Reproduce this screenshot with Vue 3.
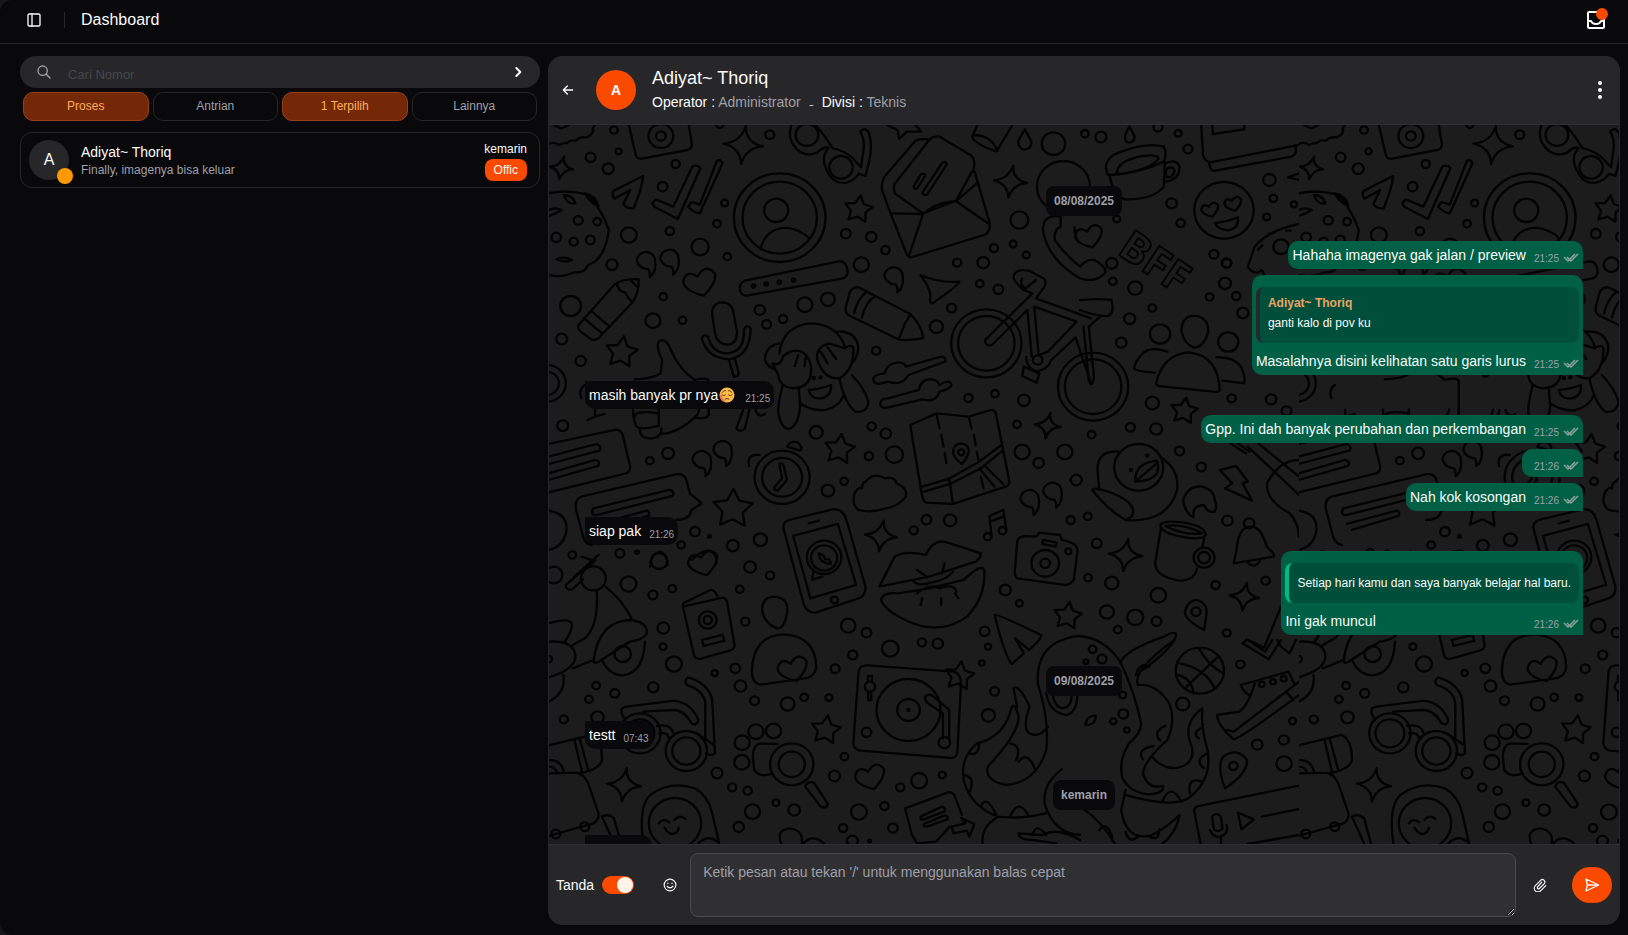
<script setup>
import { ref } from 'vue'

const tabs = [
  { label: 'Proses', active: true },
  { label: 'Antrian', active: false },
  { label: '1 Terpilih', active: true },
  { label: 'Lainnya', active: false },
]

const items = [
  { type: 'date', text: '08/08/2025' },
  { type: 'out', text: 'Hahaha imagenya gak jalan / preview', time: '21:25' },
  {
    type: 'out',
    text: 'Masalahnya disini kelihatan satu garis lurus',
    time: '21:25',
    quote: { name: 'Adiyat~ Thoriq', text: 'ganti kalo di pov ku' },
  },
  { type: 'in', text: 'masih banyak pr nya', emoji: true, time: '21:25' },
  { type: 'out', text: 'Gpp. Ini dah banyak perubahan dan perkembangan', time: '21:25' },
  { type: 'out', text: '', time: '21:26' },
  { type: 'out', text: 'Nah kok kosongan', time: '21:26' },
  { type: 'in', text: 'siap pak', time: '21:26' },
  {
    type: 'out',
    text: 'Ini gak muncul',
    time: '21:26',
    quote: { own: true, text: 'Setiap hari kamu dan saya banyak belajar hal baru.' },
  },
  { type: 'date', text: '09/08/2025' },
  { type: 'in', text: 'testt', time: '07:43' },
  { type: 'date', text: 'kemarin' },
  { type: 'in', text: '', time: '' },
]

const draft = ref('')
const search = ref('')
const signed = ref(true)

// Shape helpers for the doodle wallpaper
const star = (x, y, s, a = 8) => {
  let d = ''
  for (let i = 0; i < 10; i++) {
    const r = i % 2 ? s * 0.52 : s
    const t = ((i * 36 - 90 + a) * Math.PI) / 180
    d += `${i ? 'L' : 'M'}${Math.round(x + r * Math.cos(t))} ${Math.round(y + r * Math.sin(t))}`
  }
  return d + 'Z'
}
const sparkle = (x, y, s) => {
  const k = Math.round(s / 7)
  return `M${x + 8} ${y - s}Q${x + k - 2} ${y - k} ${x + s} ${y + 4}Q${x + k} ${y + k} ${x - 6} ${y + s}Q${x - k} ${y + k} ${x - s} ${y - 4}Q${x - k} ${y - k} ${x + 8} ${y - s}Z`
}
const heart = (x, y, s) =>
  `M${x + s * 0.3} ${y + s * 0.85}Q${x - s} ${y + s * 0.5} ${x - s} ${y - s * 0.1}Q${x - s * 0.8} ${y - s * 0.9} ${x - s * 0.1} ${y - s * 0.4}Q${x + s * 0.4} ${y - s * 1.3} ${x + s} ${y - s * 0.6}Q${x + s * 1.1} ${y} ${x + s * 0.3} ${y + s * 0.85}Z`
const comma = (x, y) => `M${x - 27} ${y}a27 27 0 0 1 52-9q8 42-14 58q1-14-4-23q-28-2-34-26z`

const doodles = [
  {
    at: 'translate(-9 -85) scale(.3444 .3333)',
    dots: [[215,270,11],[228,334,9],[147,352,14],[198,386,16],[394,372,12],[356,440,14],[667,284,13],[536,489,10],[514,551,11],[377,573,12],[258,585,23],[465,621,25],[544,650,11],[888,581,14],[962,591,15],[1003,630,12],[1318,624,12],[1374,612,10],[1412,645,10],[1392,540,26],[351,288,36],[351,288,14],[775,285,33],[874,382,34],[696,533,133],[696,533,108],[686,511,35],[111,541,13],[166,545,11],[47,592,14],[98,605,12],[146,600,13],[1491,311,34],[1520,440,77],[522,254,10]],
    paths: [
      'M258 255L278 345Q282 358 296 356L428 330Q442 326 441 312L432 255',
      'M25 312q20-8 30 3q15-8 22-5q10-12 28-8q8-12 28-10q16-2 22-20q-6-6 5-17M40 255l22 10 22-10',
      sparkle(590, 315, 57), sparkle(62, 384, 34), sparkle(1366, 425, 48),
      'M730 255Q718 290 738 318Q765 355 805 338Q825 318 838 324Q815 350 830 385Q850 435 890 428Q915 420 925 402L945 408L952 380Q968 320 955 280Q945 258 930 275Q945 300 938 340L932 382L905 352Q880 330 850 325Q830 290 800 255',
      'M299 408L215 452Q206 460 216 476L262 450L242 492Q250 506 272 505Q298 440 299 408Z',
      'M326 490L336 478L387 500L442 380Q455 372 466 384L400 537L332 500ZM430 500l10-14 24 8 50-132q12-4 16 8l-66 150q-20-2-34-20z',
      'M640 628Q655 565 715 563Q758 568 783 597',
      star(925, 508, 42),
      'M1130 298Q1105 295 1090 302L1000 410Q990 430 993 450L1018 520L1064 640Q1068 655 1085 650L1290 585Q1308 578 1306 550L1262 395',
      'M1028 450Q1026 430 1035 425L1130 300Q1140 288 1158 289L1250 345Q1265 358 1260 385L1208 482L1112 520L1030 460ZM1018 520L1112 522L1072 645M1112 522Q1150 485 1208 484L1304 552M1210 482L1268 430',
      'M1085 440l20-36q8-6 14 2l-24 40q-10 2-10-6zM1110 458l58-90q10-4 14 4l-58 92q-10 4-14-6z',
      'M25 460Q75 448 130 462Q160 480 172 510Q185 530 200 570Q195 610 180 640Q165 665 140 675Q130 700 100 697Q60 715 25 705M70 465q25 0 33 25q-25 5-33-25M130 460q30 5 40 38q-25-8-40-38M25 510q20-10 38 0q-18 12-38 18M48 658q20-10 45 2q-20 10-45-2',
      comma(308, 662), comma(376, 655),
      'M1270 255L1255 290Q1258 310 1325 335L1370 258M1258 285Q1310 285 1328 332',
      'M1408 268Q1395 290 1388 305Q1392 330 1408 329Q1428 325 1427 305Q1420 290 1408 268Z',
      'M1512 530Q1460 520 1460 570Q1475 660 1568 715Q1610 730 1640 700Q1650 685 1610 660Q1590 655 1568 680Q1520 640 1495 600Q1490 570 1512 560ZM1552 562q0 30 14 46',
      'M1008 255l30 15 5 27 22-22 42 0-17-20',
    ],
  },
  {
    at: 'translate(-9 135) scale(.3444 .3333)',
    dots: [[209,14,16],[933,14,22],[1211,8,12],[1287,8,17],[89,138,30],[358,110,11],[328,182,22],[414,181,11],[638,150,15],[658,193,13],[706,177,12],[769,134,22],[836,118,20],[1277,71,11],[1331,88,14],[1195,144,13],[1151,200,19],[976,272,12],[63,237,16],[118,303,15],[66,497,16],[372,580,17],[319,602,11],[1244,414,12],[1321,401,11],[1405,421,17],[1385,493,11],[1400,576,22],[1524,576,22],[1448,609,15],[1004,521,15],[963,499,12],[955,588,12],[1029,584,25],[802,517,19],[836,692,18],[883,664,11],[450,815,14],[492,829,4],[410,855,11],[560,857,17],[640,839,19],[232,880,13],[282,876,5],[94,885,11],[1122,779,14],[1191,781,18],[1085,811,12],[1541,780,12],[1557,660,16],[620,78,5],[657,72,5],[695,66,5],[736,60,5],[1296,250,102],[1296,250,82],[1606,380,102],[1606,380,82],[1445,300,14],[20,370,55],[20,370,35],[1223,577,9],[703,652,80],[703,652,58],[855,1020,10],[825,892,50],[825,894,38],[1300,830,11],[1343,812,11],[1467,910,40],[1467,910,14],[1534,874,9],[795,354,3],[814,352,3]],
    paths: [
      star(237, 277, 48), star(870, 568, 46), star(560, 747, 60, 2), sparkle(990, 828, 46), sparkle(1474, 497, 38), heart(462, 68, 46),
      comma(470, 599), comma(530, 569), comma(1422, 716), comma(1488, 694), comma(1027, 48),
      'M112 195L215 75Q240 55 287 58Q288 95 270 125L170 235Q158 243 146 236L118 215Q108 205 112 195M128 175L182 222M148 152L202 200M222 70Q228 95 248 98Q258 120 270 125M262 60l20 20',
      'M595 62Q575 70 582 95Q588 110 605 106L880 55Q895 48 893 30Q888 2 868 4Z',
      'M888 140Q885 155 895 165L1040 238Q1070 244 1113 234Q1108 195 1075 162L925 82Q910 80 900 95ZM912 160Q920 120 948 95M935 172Q945 125 975 108M1075 165L1060 190L1042 236',
      'M500 165Q498 128 530 127Q558 128 562 160L572 215Q572 252 545 254Q515 254 508 220ZM470 235Q485 295 548 298Q610 290 612 205Q600 192 592 208Q595 275 545 280Q500 280 488 230Q475 220 470 235M548 298L563 350Q575 352 577 340L566 296M590 450L570 505Q580 520 595 505L608 450M625 450q10 25 28 12',
      'M1105 45Q1160 70 1218 65Q1220 72 1140 130Q1132 132 1132 118Q1140 95 1105 45Z',
      'M695 280Q705 195 790 190Q865 195 885 260M697 250Q655 255 653 300Q660 320 685 330M860 215Q915 210 924 260Q925 290 905 310M675 310Q700 320 705 290Q730 265 760 275Q795 300 785 350Q775 385 735 385Q695 380 692 345ZM805 300Q800 260 840 250Q870 260 885 265Q905 250 910 265Q912 330 870 355Q825 360 805 300M705 375Q690 430 692 460Q700 505 722 507Q750 500 755 440L752 385M870 358Q885 430 915 455Q950 460 954 425Q940 380 905 345M755 430Q790 455 830 450Q870 440 882 405M780 390Q812 388 845 375Q848 410 812 416Q785 415 780 390M750 285L740 318M772 290L768 318M815 275l20 35M835 262l25 35',
      'M275 358Q330 355 350 340L355 300Q335 260 345 245Q365 230 380 270Q405 330 450 360Q490 350 490 365V465Q480 480 450 472Q400 520 350 522M270 448Q270 470 275 485Q275 505 300 505Q320 505 345 498M290 508Q290 540 330 534Q355 528 352 505M345 448v50M275 470q0-20 70-10M450 470q10-5 12-22M130 375Q110 390 120 415M160 450V470L138 480M160 470L188 462',
      'M968 355Q970 345 1000 340Q1010 305 1045 308Q1060 310 1062 320L1165 290Q1180 292 1176 305L1070 345Q1050 380 1010 365L985 372Q965 370 968 355M988 430Q990 415 1010 415L1100 390Q1105 355 1140 358Q1155 362 1160 375Q1190 355 1195 375Q1190 388 1160 395Q1150 430 1110 418L1005 444Q988 444 988 430',
      'M1292 240L1430 100L1405 90Q1370 60 1376 45Q1385 25 1420 32L1462 55Q1472 65 1465 80L1440 115L1600 175M1292 240q0 20 20 15L1415 150L1428 290M1435 140L1558 185L1475 275L1448 285ZM1412 290Q1410 320 1440 335Q1475 330 1485 300L1555 232L1600 370M1405 320l45 20-8 28-42-20zM1400 56Q1390 75 1410 85L1440 60',
      'M1075 495L1152 460L1245 470L1310 450Q1322 450 1324 462L1363 665Q1362 680 1345 682L1200 732L1120 728Q1112 722 1108 700ZM1110 680L1190 655L1275 605L1340 555M1115 695L1195 670L1280 625L1343 572M1275 625L1320 680M1292 618L1345 672M1152 465l8 40M1165 525l7 35M1175 580l5 30M1188 655l10 70M1245 470l8 35M1260 525l5 30M1268 575l5 25M1280 650l8 35',
      'M1225 612Q1195 590 1200 570Q1205 550 1225 551Q1245 553 1245 575Q1240 595 1225 612Z',
      'M695 612Q702 605 708 618L717 660L690 692Q680 692 680 682L703 655ZM607 618Q600 580 638 585M718 560Q725 540 750 548Q765 565 755 572Z',
      'M945 665Q970 635 1000 655Q1030 648 1035 670Q1068 685 1062 710Q1040 740 1005 745Q960 760 925 750Q905 735 912 705Q920 680 935 685Q935 670 945 665Z',
      'M25 552L220 509Q235 510 240 525L262 620Q262 635 250 640L25 697M25 590L165 552Q182 560 172 572L25 612M25 640L160 600Q178 605 168 618L25 660',
      'M120 710L400 642Q420 642 425 660L435 700L470 730L440 750Q435 780 395 780M120 710Q98 720 105 750L125 830Q130 850 150 855M155 745L375 690Q392 692 385 708L160 766Q145 762 155 745M165 792L310 752Q322 758 315 768L180 810',
      'M25 752Q80 760 77 810Q70 860 25 870',
      'M708 810Q700 785 730 778L850 748Q880 745 890 780L945 980Q945 1010 925 1015L800 1058Q775 1060 765 1030ZM735 828L865 792L918 975L785 1015ZM780 790l30-8M795 930l-5 30 30-10M810 880q0 30 35 32l-5-14-12 0-6-12z',
      'M1311 828L1305 768L1345 750L1354 808M1306 785L1345 770',
      'M1385 850Q1385 830 1410 828L1440 830L1450 818L1510 825L1515 840Q1568 850 1560 880L1550 960Q1540 975 1525 975L1385 955Q1375 945 1380 920ZM1460 840l40 8-2 12-40-8z',
      'M985 980L1030 890Q1060 870 1120 885Q1140 840 1175 845L1280 880Q1280 895 1265 905L1130 950ZM990 1020Q995 995 1040 1000L1130 985L1230 960Q1280 910 1290 930Q1295 1010 1240 1070Q1160 1130 1060 1080Q1000 1050 990 1020M1095 1000Q1130 970 1160 985Q1200 970 1210 995M1110 1015l-5 20M1165 1015v20M1205 1000l10 15M1085 965Q1100 980 1135 968Q1180 960 1200 935M1095 930l30 22M1175 910l-8 30',
      'M320 920q0-40 30-45q20 10 20 40M440 900Q470 870 490 873Q515 880 512 910M100 950L170 885M150 900l-30-10',
    ],
  },
  {
    at: 'translate(-9 435) scale(.3444 .3333)',
    dots: [[40,45,25],[346,3,24],[610,21,17],[668,46,12],[580,88,11],[257,72,23],[328,105,13],[384,86,11],[596,185,12],[895,197,21],[948,218,14],[1017,266,24],[1109,247,12],[1155,251,15],[908,285,13],[857,326,13],[839,413,10],[767,412,11],[719,432,20],[623,422,13],[582,378,17],[567,325,14],[507,339,9],[389,312,23],[357,260,10],[358,204,17],[329,382,15],[163,377,11],[217,400,13],[142,418,11],[69,478,12],[167,472,18],[514,639,16],[558,682,12],[603,692,12],[685,728,10],[738,750,17],[617,755,22],[577,801,15],[884,590,11],[855,648,16],[1101,662,23],[1168,645,10],[1046,682,12],[1000,738,12],[926,756,23],[880,804,12],[1025,804,14],[907,843,16],[957,843,4],[1351,90,16],[1392,130,10],[1291,214,14],[1301,260,9],[1283,309,8],[1320,394,13],[1302,466,19],[948,517,14],[487,180,26],[487,180,12],[240,282,24],[25,297,10],[425,573,60],[425,573,41],[290,520,60],[290,520,42],[392,790,76],[731,613,63],[731,613,38],[1070,450,93],[1070,450,33],[1070,450,3],[1174,548,17],[958,380,15],[587,548,22],[627,515,22],[678,513,22],[586,607,22],[155,55,36],[46,822,13],[130,800,13]],
    paths: [
      heart(472, 10, 42), heart(957, 652, 42), heart(732, 328, 42), star(1532, 168, 42), star(1218, 348, 44), star(830, 510, 44), sparkle(244, 675, 50),
      'M415 140Q412 130 425 125L495 90Q505 88 515 108M415 140L530 113Q540 115 543 125L565 255Q565 268 550 272L465 297Q450 297 447 285ZM470 240l60-15 5 18-60 15z',
      'M645 150Q645 110 682 110Q722 115 718 155Q710 205 690 206Q650 190 645 150Z',
      'M615 330Q620 225 710 223Q800 230 802 320Q800 350 770 355L640 374Q615 370 615 330Z',
      'M165 95Q170 200 130 235L95 255M190 80Q240 120 268 180M75 75L125 30Q145 20 160 0M75 75q0 18 20 12L125 58M155 305Q170 180 265 180Q320 190 308 225Q295 240 260 245L170 305Q160 312 155 305M180 300Q200 345 240 346Q300 340 305 245M25 190Q90 170 93 195Q90 220 70 248M25 245Q100 240 103 290Q100 330 25 352M95 325L155 300M68 345Q75 400 25 425',
      'M245 475Q225 445 250 440L390 422Q440 430 460 480Q455 500 440 490Q420 450 385 450L300 455M430 352Q490 370 500 420L508 580Q500 590 482 580M430 352Q415 365 428 376Q475 390 480 430V535M340 498Q380 490 388 520M345 520Q370 515 375 535M455 520L505 555',
      'M25 556L150 525Q180 540 180 600Q175 625 125 638L25 640M100 540l22 95M115 535l25 95M25 600Q65 600 70 640M25 620q20 0 25 20',
      'M110 640Q130 645 140 670L170 760Q172 780 155 790L25 828M180 770Q200 760 215 775L235 850M180 770L215 850',
      'M300 850Q285 740 320 705Q380 660 450 685Q490 710 500 760L520 850M345 790q12-18 30-3M390 780q15-18 32-3M362 803Q370 820 385 822Q400 820 403 803M460 850q30-30 60 0',
      'M690 552L640 550Q618 555 618 590L622 630Q640 655 675 640M770 680L815 740Q835 748 835 730L795 668Q775 662 770 680',
      'M925 335Q928 315 950 316L1200 335Q1225 340 1222 380L1212 575Q1210 592 1195 594L930 572Q908 568 910 545ZM952 362v-14h12v14M953 398v22h9v-22M1118 410Q1128 400 1140 408L1188 450V535M1118 410q0 12 8 20L1170 460V535',
      'M1320 165Q1325 160 1455 225Q1458 235 1420 270L1380 235L1405 280L1370 312Q1350 290 1320 165Z',
      'M1445 370Q1440 260 1530 235Q1550 228 1568 228M1445 370Q1480 480 1470 570Q1440 670 1350 675Q1290 660 1300 620Q1390 520 1390 470Q1380 430 1370 440Q1350 530 1270 550Q1220 590 1230 660Q1250 740 1330 770Q1400 778 1468 760M1385 440L1375 385Q1390 370 1422 440Q1400 500 1420 520Q1450 535 1475 500M1245 580q30 10 30-30M1230 645q35 5 18 50M1280 740q15-40 45 25M1365 770q25-60 55 0M1365 550q35 5 18 50M1390 605q25-35 47 22M1515 628Q1460 670 1465 730Q1490 820 1568 825M1330 770Q1280 800 1285 850M1568 840Q1500 800 1460 825L1390 820Q1390 840 1430 840L1500 850M1430 825q10-40 40 0',
      'M1470 400Q1480 460 1530 465Q1560 455 1560 405M1488 400q5 40 30 45q28-5 25-45',
      'M1060 745L1185 697Q1200 695 1205 710L1225 765M1060 745L1080 825L1095 850L1150 845L1190 800M1105 770l62-30q10 0 8 14l-60 24q-12 2-10-8zM1115 792l60-26q12 2 8 12l-60 22q-12 0-8-8zM1195 800l40-10-12-16 38 18-14 38-8-18-38 8z',
      'M700 850Q685 810 725 805Q765 810 760 850M765 850Q790 820 825 850',
    ],
  },
  {
    at: 'translate(531 -125) scale(.3495 .3333)',
    dots: [[14,401,11],[60,411,16],[223,382,13],[281,400,10],[309,447,13],[542,540,18],[553,595,11],[612,613,9],[534,651,10],[262,610,15],[288,669,12],[105,657,10],[383,763,13],[419,789,14],[91,790,16],[412,631,85],[575,740,22]],
    paths: [
      'M141 380Q130 400 128 412Q130 428 142 428Q156 425 156 410Q150 395 141 380Z',
      'M80 525Q60 480 110 458Q190 425 240 440Q250 460 240 485Q170 520 85 525ZM105 518Q110 480 180 468Q220 462 225 475Q210 500 150 515Q115 525 105 518M85 525Q95 590 130 598Q210 600 240 560L243 485M245 490Q275 475 285 500Q285 540 243 545M250 505q20-8 20 10q-5 20-22 15q-6-15 2-25',
      'M347 375L352 465Q358 485 372 487L627 435M370 490Q372 510 382 513L605 470Q625 460 615 435M378 375L380 402L470 388V375',
      heart(371, 630, 24), heart(437, 612, 24), 'M386 670Q420 665 452 652Q455 685 425 691Q395 690 386 670Z',
      'M627 672Q540 690 500 740L480 800Q500 830 520 810L530 830M627 520L595 532L627 540M510 748l12-12M540 702l15-4M590 692l12 0',
      heart(24, 710, 38),
    ],
  },
  {
    at: 'translate(531 135) scale(.3495 .3333)',
    dots: [[94,64,11],[158,84,20],[415,70,17],[420,10,13],[371,111,11],[447,108,12],[207,144,11],[142,176,16],[466,159,16],[118,248,15],[207,429,19],[434,415,12],[547,418,15],[591,453,14],[144,502,13],[218,507,17],[33,524,11],[229,222,29],[424,246,29]],
    paths: [
      'M290 212Q292 168 328 167Q368 172 367 215Q355 262 325 263Q297 250 290 212Z',
      'M218 370Q235 285 310 277Q395 285 400 390Q400 397 380 395L225 378Q218 376 218 370M250 275Q200 255 175 285Q155 310 155 325Q160 335 215 338M390 292Q440 290 460 320Q475 350 470 370L408 362',
      star(298, 453, 40),
      'M0 120Q60 115 90 120Q100 160 80 168Q50 170 0 150M10 200L25 360Q35 390 40 350L25 200L60 168',
    ],
  },
  {
    at: 'translate(531 315) scale(.3495 .3333)',
    dots: [[285,33,13],[347,81,13],[22,229,11],[422,242,15],[48,310,14],[23,413,11],[91,429,19],[224,466,22],[77,516,20],[158,532,23],[219,544,14],[108,569,11],[388,435,12],[531,422,12],[420,579,11],[168,82,70],[192,47,3],[146,90,3],[355,353,30],[355,353,17],[484,250,15],[332,515,13]],
    paths: [
      'M110 35Q50 30 50 90L55 150M235 55Q285 90 278 150Q250 250 130 240Q80 210 35 150Q40 140 80 155Q150 180 153 215Q150 235 130 240M158 125Q155 70 220 62Q240 120 158 125L222 68',
      'M400 90L447 78L480 125L465 130L492 182L415 145L435 130Z',
      'M325 232Q300 220 295 180Q310 135 350 140Q385 150 385 180Q395 195 385 215Q365 220 355 195Q320 195 325 232Z',
      'M230 255Q235 240 300 248Q360 260 360 285Q355 300 300 292Q230 280 230 255M245 258q50-8 105 22q-50 8-105-22M232 262L215 370Q215 410 285 422Q330 420 335 385M355 297L350 325',
      'M465 270Q450 290 448 330Q440 365 440 370L555 350Q560 345 535 320Q520 270 500 262Q480 255 465 270M480 368q20 20 35-5',
      sparkle(130, 345, 48), sparkle(470, 470, 42),
      'M355 570Q300 540 300 515Q310 480 335 480Q365 490 362 520Z',
      'M480 20L627 165M510 10L627 110M627 60Q570 60 535 130Q530 180 600 220Q625 250 627 290M430 10l45 30M445 5l40 30',
      'M467 610l10-12 50 25L575 500',
      'M115 668Q130 630 240 590Q275 570 275 585Q270 620 180 690',
    ],
  },
  {
    at: 'translate(531 515) scale(.3495 .3333)',
    dots: [[36,28,11],[63,57,13],[17,65,7],[122,165,10],[124,222,14],[95,244,9],[134,270,8],[459,73,12],[294,192,19],[608,243,10],[507,314,15],[583,300,14],[584,371,22],[343,92,69],[520,133,8],[552,125,8],[583,116,8],[439,378,12]],
    paths: [
      'M285 70Q360 85 385 145M340 25Q370 80 410 100M305 140L395 50M280 105q40 10 45 55',
      'M465 10L540 58L575 0M480 0l50 35 20-35M565 0l10 20 25 20 18-40',
      'M460 135L597 95L612 130M460 135Q470 160 485 165M500 130Q480 200 455 215L392 225Q395 260 440 298Q460 295 627 165M420 270L440 275L627 125M590 155l20 25',
      'M0 -12Q70 -5 115 65Q155 150 175 250Q175 280 140 310Q110 360 120 410Q140 460 200 463Q240 460 238 438Q195 450 180 400Q185 360 250 300Q275 240 255 190Q220 130 165 135Q150 90 270 0M205 350Q240 390 280 383Q330 370 320 320Q290 250 350 205Q345 260 365 330Q380 420 310 475Q260 505 130 465M130 450L118 510Q130 600 200 588Q240 570 285 525Q275 580 235 612M160 105q10-40 38-25M245 257q-40 20-15 45M210 318q-50 10-30 40M345 265q-25 15-5 30M365 340q-40 20-10 45M315 460q-10-50 35-35M235 485q25-60 55 0M130 575q10 40 40 12M195 588q30 20 32-20',
      'M15 255q5-30 30-28q0 30-30 28z',
      'M415 445Q390 380 410 350Q450 320 478 360Q480 400 415 445Z',
      'M345 612L327 515Q325 500 345 497L627 437M378 530q10-15 25 0l5 35q-10 15-25 3zM372 570q10 25 30 20q25-10 17-35M403 590v20M452 518l45 20-35 30zM520 530L627 507M480 612L627 585M0 500Q60 540 100 612M55 570q20-30 38 22',
    ],
  },
]
</script>

<template>
  <div class="app">
    <header class="topbar">
      <button class="icon-btn" type="button" aria-label="Toggle sidebar">
        <svg width="16" height="16" viewBox="0 0 24 24" class="line">
          <rect x="3" y="3" width="18" height="18" rx="2" /><path d="M9 3v18" />
        </svg>
      </button>
      <span class="divider"></span>
      <h1>Dashboard</h1>
      <button class="inbox" type="button" aria-label="Inbox">
        <svg width="24" height="24" viewBox="0 0 24 24" class="line">
          <rect x="4" y="4" width="16" height="16" rx="1" />
          <path d="M4 13h3q1 3 5 3t5-3h3" />
        </svg>
        <span class="inbox-dot"></span>
      </button>
    </header>

    <main class="content">
      <aside class="sidebar">
        <form class="search" role="search" @submit.prevent>
          <svg width="16" height="16" viewBox="0 0 24 24" class="line muted">
            <circle cx="10" cy="10" r="7" /><path d="M21 21l-6-6" />
          </svg>
          <input v-model="search" type="text" placeholder="Cari Nomor" aria-label="Cari Nomor" />
          <button class="icon-btn" type="submit" aria-label="Cari">
            <svg width="16" height="16" viewBox="0 0 24 24" class="line bold"><path d="M8 6l6 6-6 6" /></svg>
          </button>
        </form>
        <nav class="tabs" aria-label="Filter">
          <button v-for="t in tabs" :key="t.label" type="button" :class="['tab', { active: t.active }]">{{ t.label }}</button>
        </nav>
        <button class="contact" type="button">
          <span class="avatar">A<span class="presence"></span></span>
          <span class="contact-main">
            <span class="contact-name">Adiyat~ Thoriq</span>
            <span class="contact-last">Finally, imagenya bisa keluar</span>
          </span>
          <span class="contact-side">
            <span class="contact-when">kemarin</span>
            <span class="badge">Offic</span>
          </span>
        </button>
      </aside>

      <section class="chat" aria-label="Percakapan">
        <div class="chat-head">
          <button class="icon-btn" type="button" aria-label="Kembali">
            <svg width="16" height="16" viewBox="0 0 24 24" class="line"><path d="M19 12H5M11 6l-6 6 6 6" /></svg>
          </button>
          <span class="avatar big">A</span>
          <div class="chat-title">
            <h2>Adiyat~ Thoriq</h2>
            <p>Operator : <em>Administrator</em><span class="dash">&#8331;</span>Divisi : <em>Teknis</em></p>
          </div>
          <button class="icon-btn more" type="button" aria-label="Menu">
            <svg width="24" height="24" viewBox="0 0 24 24" fill="currentColor">
              <circle cx="12" cy="5" r="2" /><circle cx="12" cy="12" r="2" /><circle cx="12" cy="19" r="2" />
            </svg>
          </button>
        </div>

        <div class="chat-body">
          <svg class="wallpaper" width="100%" height="100%" aria-hidden="true">
            <defs>
              <pattern id="doodle" width="750" height="1600" patternUnits="userSpaceOnUse">
                <g class="ink">
                  <g v-for="(g, i) in doodles" :key="i" :transform="g.at">
                    <path v-for="(d, j) in g.paths" :key="'p' + j" :d="d" />
                    <circle v-for="(c, j) in g.dots" :key="'c' + j" :cx="c[0]" :cy="c[1]" :r="c[2]" />
                  </g>
                </g>
                <text class="bff" transform="translate(567 128) rotate(34)">BFF</text>
              </pattern>
            </defs>
            <rect width="100%" height="100%" fill="url(#doodle)" />
          </svg>

          <ol class="messages">
            <li v-for="(m, i) in items" :key="i" :class="['row', m.type]">
              <time v-if="m.type === 'date'" class="date">{{ m.text }}</time>
              <div v-else class="bubble">
                <blockquote v-if="m.quote" :class="['quote', { own: m.quote.own }]">
                  <strong v-if="m.quote.name">{{ m.quote.name }}</strong>
                  <p>{{ m.quote.text }}</p>
                </blockquote>
                <div class="line-row">
                  <span class="text">{{ m.text }}<svg v-if="m.emoji" class="emoji" width="16" height="16" viewBox="0 0 32 32" role="img" aria-label="relieved face">
                      <circle cx="16" cy="16" r="15" fill="#fdbb48" />
                      <path d="M1 17a15 15 0 0 0 15 14q-9-6-10-12T1 17z" fill="#f2704d" />
                      <path d="M6 11q3-4 7-4M26 11q-3-4-7-4M6 16q3 3 7 0M19 16q4 3 7 0M12 24q4-2 8 0" fill="none" stroke="#6b3a2b" stroke-width="2" stroke-linecap="round" />
                    </svg></span>
                  <span class="meta">
                    <time v-if="m.time">{{ m.time }}</time>
                    <svg v-if="m.type === 'out'" width="16" height="12" viewBox="0 0 16 12" class="ticks">
                      <path d="M1 4l4 4 1-1M4 4l4 4 7-7M7 6l5-5" />
                    </svg>
                  </span>
                </div>
              </div>
            </li>
          </ol>
        </div>

        <form class="composer" @submit.prevent>
          <label class="sign">Tanda<input v-model="signed" type="checkbox" role="switch" /></label>
          <button class="tool" type="button" aria-label="Emoji">
            <svg width="14" height="14" viewBox="0 0 24 24" class="line">
              <circle cx="12" cy="12" r="10" /><path d="M7 14q2 3 5 3t5-3M8 9h1M15 9h1" />
            </svg>
          </button>
          <textarea v-model="draft" placeholder="Ketik pesan atau tekan '/' untuk menggunakan balas cepat" aria-label="Pesan"></textarea>
          <button class="tool" type="button" aria-label="Lampirkan">
            <svg width="14" height="14" viewBox="0 0 24 24" class="line">
              <path d="M15 7l-7 8a2 2 0 0 0 3 3l8-8a4 4 0 0 0-6-6l-9 9a6 6 0 0 0 9 9l9-9" />
            </svg>
          </button>
          <button class="send" type="submit" aria-label="Kirim">
            <svg width="16" height="16" viewBox="0 0 24 24" class="line">
              <path d="M3 3l2 9-2 9 19-9zM6 12h14" />
            </svg>
          </button>
        </form>
      </section>
    </main>
  </div>
</template>

<style>
body {
  margin: 0;
  background: #18181b;
}
</style>

<style scoped>
.app {
  box-sizing: border-box;
  display: flex;
  flex-direction: column;
  height: 100vh;
  border-radius: 12px 0 0 12px;
  background: #09090b;
  color: #fafafa;
  font-family: "Liberation Sans", Arial, sans-serif;
  font-size: 14px;
  line-height: 20px;
}
.app * {
  box-sizing: border-box;
}
button,
input,
textarea {
  font: inherit;
  color: inherit;
  border: 0;
  padding: 0;
  background: none;
}
button {
  cursor: pointer;
}
h1,
h2,
p,
ol,
blockquote {
  margin: 0;
  padding: 0;
  font-weight: 400;
}
svg {
  display: block;
  flex: none;
}
.line {
  fill: none;
  stroke: currentColor;
  stroke-width: 2;
  stroke-linecap: round;
  stroke-linejoin: round;
}
.line.bold {
  stroke-width: 3;
}
.muted {
  color: #9f9fa9;
}
.icon-btn {
  flex: none;
}

.topbar {
  display: flex;
  align-items: center;
  height: 44px;
  padding: 0 20px 4px 26px;
  border-bottom: 1px solid #27272a;
}
.divider {
  width: 1px;
  height: 16px;
  margin: 0 16px 0 22px;
  background: #27272a;
}
.topbar h1 {
  flex: 1;
  font-size: 16px;
}
.inbox {
  position: relative;
}
.inbox-dot {
  position: absolute;
  top: 0;
  right: 0;
  width: 12px;
  height: 12px;
  border-radius: 50%;
  background: #f94a00;
}

.content {
  flex: 1;
  min-height: 0;
  display: grid;
  grid-template-columns: minmax(0, 520fr) minmax(0, 1072fr);
  gap: 8px;
  padding: 12px 8px 10px 20px;
}

.search {
  display: flex;
  align-items: center;
  height: 32px;
  padding: 0 13px 0 16px;
  border-radius: 16px;
  background: #27272a;
}
.search input {
  flex: 1;
  min-width: 0;
  height: 32px;
  padding: 4px 0 0 16px;
  font-size: 13px;
  outline: 0;
}
.search input::placeholder {
  color: #46464d;
}
.tabs {
  display: grid;
  grid-template-columns: repeat(4, 1fr);
  gap: 4px;
  padding: 4px 3px 11px;
}
.tab {
  height: 29px;
  padding-bottom: 2px;
  border: 1px solid #27272a;
  border-radius: 10px;
  color: #9f9fa9;
  font-size: 12px;
}
.tab.active {
  border-color: #90421f;
  background: #752808;
  color: #ffad5c;
}
.contact {
  display: flex;
  align-items: center;
  gap: 12px;
  width: 100%;
  height: 56px;
  padding: 0 12px 0 8px;
  border: 1px solid #27272a;
  border-radius: 12px;
  text-align: left;
}
.avatar {
  position: relative;
  flex: none;
  display: grid;
  place-items: center;
  width: 40px;
  height: 40px;
  border-radius: 50%;
  background: #27272a;
  font-size: 16px;
}
.presence {
  position: absolute;
  right: -4px;
  bottom: -4px;
  width: 16px;
  height: 16px;
  border-radius: 50%;
  background: #fe9a00;
}
.contact-main {
  flex: 1;
  min-width: 0;
  display: flex;
  flex-direction: column;
}
.contact-last {
  color: #9f9fa9;
  font-size: 12px;
  line-height: 16px;
}
.contact-side {
  display: flex;
  flex-direction: column;
  align-items: flex-end;
  font-size: 12px;
}
.badge {
  padding: 1px 9px;
  border-radius: 8px;
  background: #f94a00;
}

.chat {
  display: flex;
  flex-direction: column;
  min-height: 0;
  overflow: hidden;
  border: 1px solid #27272a;
  border-radius: 14px;
  background: #27272a;
}
.chat-head {
  display: flex;
  align-items: center;
  height: 68px;
  padding: 0 7px 2px 11px;
  border-bottom: 1px solid #303033;
}
.avatar.big {
  margin: 0 16px 0 20px;
  background: #f94a00;
  font-size: 14px;
  font-weight: 700;
}
.chat-title {
  flex: 1;
  padding-bottom: 3px;
}
.chat-title h2 {
  font-size: 18px;
  line-height: 28px;
}
.chat-title em {
  color: #9f9fa9;
  font-style: normal;
}
.dash {
  margin: 0 8px;
}

.chat-body {
  position: relative;
  flex: 1;
  min-height: 0;
  overflow: hidden;
  background: #1c1c1c;
}
.wallpaper {
  position: absolute;
  inset: 0;
}
.ink {
  fill: none;
  stroke: #020202;
  stroke-width: 7;
  stroke-linecap: round;
  stroke-linejoin: round;
}
.bff {
  fill: none;
  stroke: #020202;
  stroke-width: 2;
  font: 700 42px "Open Sans", sans-serif;
}
.messages {
  position: relative;
  display: flex;
  flex-direction: column;
  gap: 6px;
  padding: 36px 36px 0;
  list-style: none;
}
.row {
  display: flex;
}
.row.out {
  justify-content: flex-end;
}
.row.date {
  justify-content: center;
  margin: 25px 0 19px;
}
time.date {
  padding: 5px 8px;
  border-radius: 8px;
  background: #09090b;
  color: #9f9fa9;
  font-size: 12px;
  font-weight: 700;
}
.bubble {
  padding: 4px;
  border-radius: 10px;
}
.out .bubble {
  border-bottom-right-radius: 0;
  background: #006045;
}
.in .bubble {
  min-width: 67px;
  border-top-left-radius: 0;
  background: #09090b;
}
.line-row {
  display: flex;
  justify-content: space-between;
  align-items: flex-end;
  gap: 8px;
  height: 20px;
}
.text {
  display: flex;
  align-items: center;
}
.emoji {
  margin: 0 2px 0 1px;
}
.meta {
  display: flex;
  gap: 4px;
  color: #9f9fa9;
  font-size: 10px;
  line-height: 12px;
}
.ticks {
  fill: none;
  stroke: #8fa39c;
  stroke-width: 1.5;
}
.quote {
  margin: 8px 0;
  padding: 8px 8px 12px;
  border-left: 4px solid #27272a;
  border-radius: 8px;
  background: #004f3b;
  font-size: 12px;
  line-height: 16px;
}
.quote.own {
  border-left-color: #00bc7d;
}
.quote strong {
  display: block;
  color: #eca365;
}
.quote p {
  margin-top: 4px;
}

.composer {
  display: flex;
  align-items: center;
  padding: 8px 7px 7px;
  border-top: 1px solid #303033;
}
.sign {
  display: flex;
  align-items: center;
  gap: 8px;
  margin-right: 20px;
}
.sign input {
  appearance: none;
  width: 32px;
  height: 18px;
  margin: 0;
  padding: 1px;
  border-radius: 9px;
  background: #52525c;
}
.sign input::before {
  content: "";
  display: block;
  width: 16px;
  height: 16px;
  border-radius: 50%;
  background: #fff4ea;
}
.sign input:checked {
  background: #f94a00;
}
.sign input:checked::before {
  margin-left: 14px;
}
.tool {
  display: grid;
  place-items: center;
  flex: none;
  width: 32px;
  height: 36px;
}
.composer textarea {
  flex: 1;
  min-width: 0;
  height: 64px;
  margin: 0 8px 0 4px;
  padding: 8px 12px;
  border: 1px solid #4a4a4e;
  border-radius: 8px;
  background: #303032;
  outline: 0;
}
.composer textarea::placeholder {
  color: #9f9fa9;
}
.send {
  display: grid;
  place-items: center;
  flex: none;
  width: 40px;
  height: 36px;
  margin-left: 16px;
  border-radius: 18px;
  background: #f94a00;
}
</style>
